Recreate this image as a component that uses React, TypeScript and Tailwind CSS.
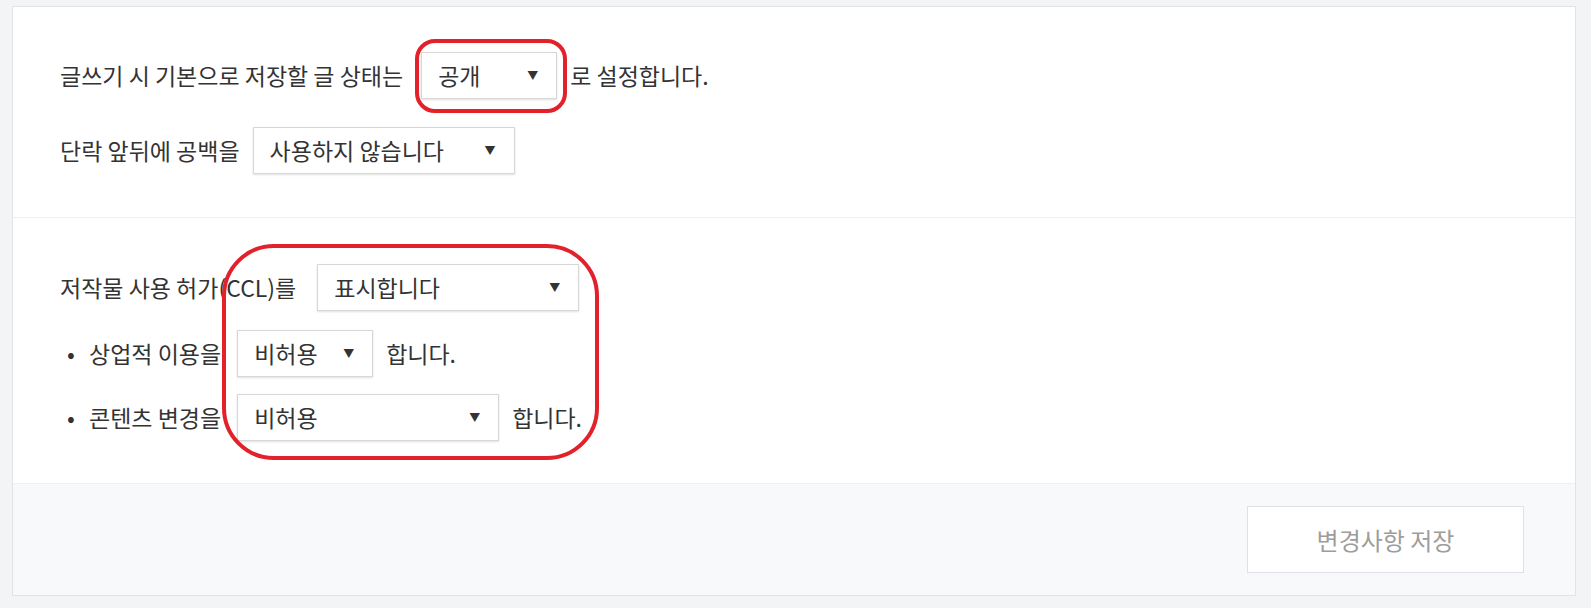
import { useState } from 'react';

// Settings page: default post status, paragraph spacing, CCL options
interface SelectBoxProps {
  value: string;
  widthClass: string;
}

function SelectBox({ value, widthClass }: SelectBoxProps) {
  return (
    <button
      type="button"
      className={`flex h-[47px] shrink-0 items-center justify-between border border-[#d7d7d7] bg-white pl-4 pr-[18px] text-left text-[#333] shadow-[0_1px_2px_rgba(0,0,0,0.12)] ${widthClass}`}
    >
      <span>{value}</span>
      <span className="text-[11px] text-[#333]">▼</span>
    </button>
  );
}

export default function App() {
  const [saved] = useState(false);

  return (
    <div className="min-h-[608px] bg-[#f3f4f6] pl-3 pr-[15px] pt-[6px] font-['Noto_Sans_CJK_KR','Noto_Sans',sans-serif] text-[23px] text-[#333]">
      <div className="border border-[#e1e3e7] bg-white">
        {/* Post defaults */}
        <section className="relative flex flex-col gap-[28px] px-[47px] pb-[43px] pt-[45px]">
          <div className="flex items-center">
            <span>글쓰기 시 기본으로 저장할 글 상태는</span>
            <span className="ml-[18px]" />
            <SelectBox value="공개" widthClass="w-[136px]" />
            <span className="ml-[13px]">로 설정합니다.</span>
          </div>
          <div className="flex items-center">
            <span>단락 앞뒤에 공백을</span>
            <span className="ml-[13px]" />
            <SelectBox value="사용하지 않습니다" widthClass="w-[262px]" />
          </div>

          {/* annotation */}
          <div className="pointer-events-none absolute left-[402px] top-[32px] h-[74px] w-[152px] rounded-[20px] border-4 border-[#e2212b]" />
        </section>

        <div className="h-px bg-[#efefef]" />

        {/* CCL */}
        <section className="relative flex flex-col px-[47px] pb-[42px] pt-[46px]">
          <div className="flex items-center">
            <span>저작물 사용 허가(CCL)를</span>
            <span className="ml-[21px]" />
            <SelectBox value="표시합니다" widthClass="w-[262px]" />
          </div>
          <ul className="mt-[19px] flex flex-col gap-[17px]">
            <li className="flex items-center">
              <span className="w-[29px] pl-[7px]">•</span>
              <span>상업적 이용을</span>
              <span className="ml-[16px]" />
              <SelectBox value="비허용" widthClass="w-[136px]" />
              <span className="ml-[13px]">합니다.</span>
            </li>
            <li className="flex items-center">
              <span className="w-[29px] pl-[7px]">•</span>
              <span>콘텐츠 변경을</span>
              <span className="ml-[16px]" />
              <SelectBox value="비허용" widthClass="w-[262px]" />
              <span className="ml-[13px]">합니다.</span>
            </li>
          </ul>

          {/* annotation */}
          <div className="pointer-events-none absolute left-[209px] top-[26px] h-[216px] w-[377px] rounded-[52px] border-4 border-[#e2212b]" />
        </section>

        {/* Footer */}
        <div className="flex h-[112px] items-start justify-end border-t border-[#eef0f3] bg-[#f8f9fb] pr-[51px] pt-[22px]">
          <button
            type="button"
            disabled={!saved}
            className="h-[67px] w-[277px] border border-[#dfe1e6] bg-white text-[24px] text-[#9d9d9d]"
          >
            변경사항 저장
          </button>
        </div>
      </div>
    </div>
  );
}
